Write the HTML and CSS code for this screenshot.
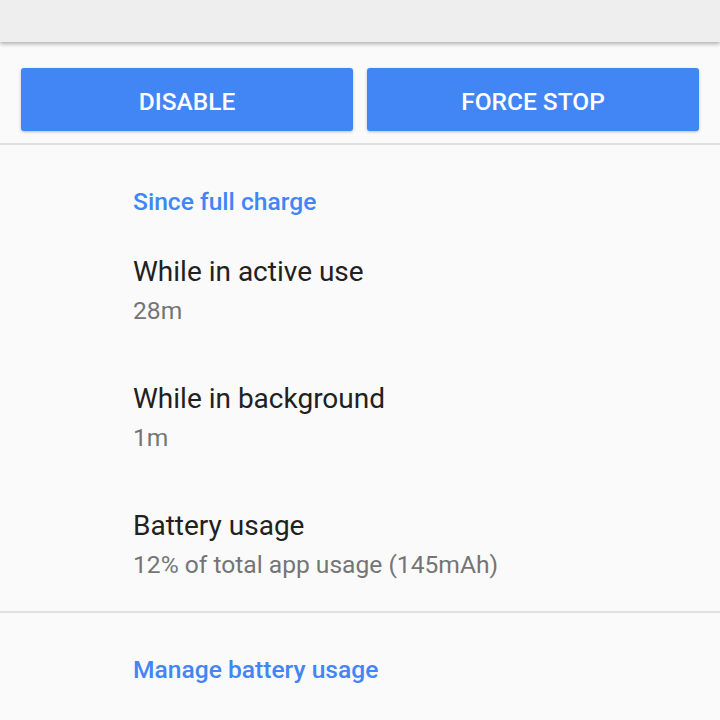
FILE: index.html
```html
<!DOCTYPE html>
<html lang="en">
<head>
    <meta charset="UTF-8">
    <meta name="viewport" content="width=device-width, initial-scale=1.0">
    <title>App info</title>
    <link rel="stylesheet" href="styles.css">
</head>
<body>
    <div class="appbar"></div>

    <div class="actions">
        <button class="action-button">DISABLE</button>
        <button class="action-button">FORCE STOP</button>
    </div>

    <div class="section">
        <div class="section-title">Since full charge</div>

        <div class="pref">
            <div class="pref-title">While in active use</div>
            <div class="pref-summary">28m</div>
        </div>
        <div class="pref">
            <div class="pref-title">While in background</div>
            <div class="pref-summary">1m</div>
        </div>
        <div class="pref">
            <div class="pref-title">Battery usage</div>
            <div class="pref-summary">12% of total app usage (145mAh)</div>
        </div>
    </div>

    <div class="section link-section">
        <div class="section-title">Manage battery usage</div>
    </div>
</body>
</html>
```

FILE: styles.css
```css
body { margin: 0; background-color: #fafafa; font-family: Roboto, "Noto Sans", sans-serif; color: #212121; overflow: hidden; }
.appbar { height: 42px; background-color: #eeeeee; box-shadow: 0 2px 4px rgba(0,0,0,0.3); position: relative; }
.actions { display: flex; gap: 14px; padding: 26px 21px 12px; border-bottom: 2px solid #e0e0e0; }
.action-button { flex: 1; height: 63px; padding: 3px 0 0; border: none; border-radius: 3px; background-color: #4285f4; color: #fff; font-family: Roboto, sans-serif; font-weight: 500; font-size: 24.5px; box-shadow: 0 1px 3px rgba(0,0,0,0.25); }
.section { padding: 41px 0 2px 133px; border-bottom: 2px solid #e0e0e0; }
.section-title { color: #4285f4; font-weight: 500; font-size: 24.6px; line-height: 32px; margin-bottom: 10px; }
.pref { padding: 27px 0; }
.pref-title { font-size: 28px; line-height: 34px; }
.pref-summary { font-size: 24.6px; line-height: 34px; margin-top: 5px; color: #757575; }
.link-section { border-bottom: none; }
```
